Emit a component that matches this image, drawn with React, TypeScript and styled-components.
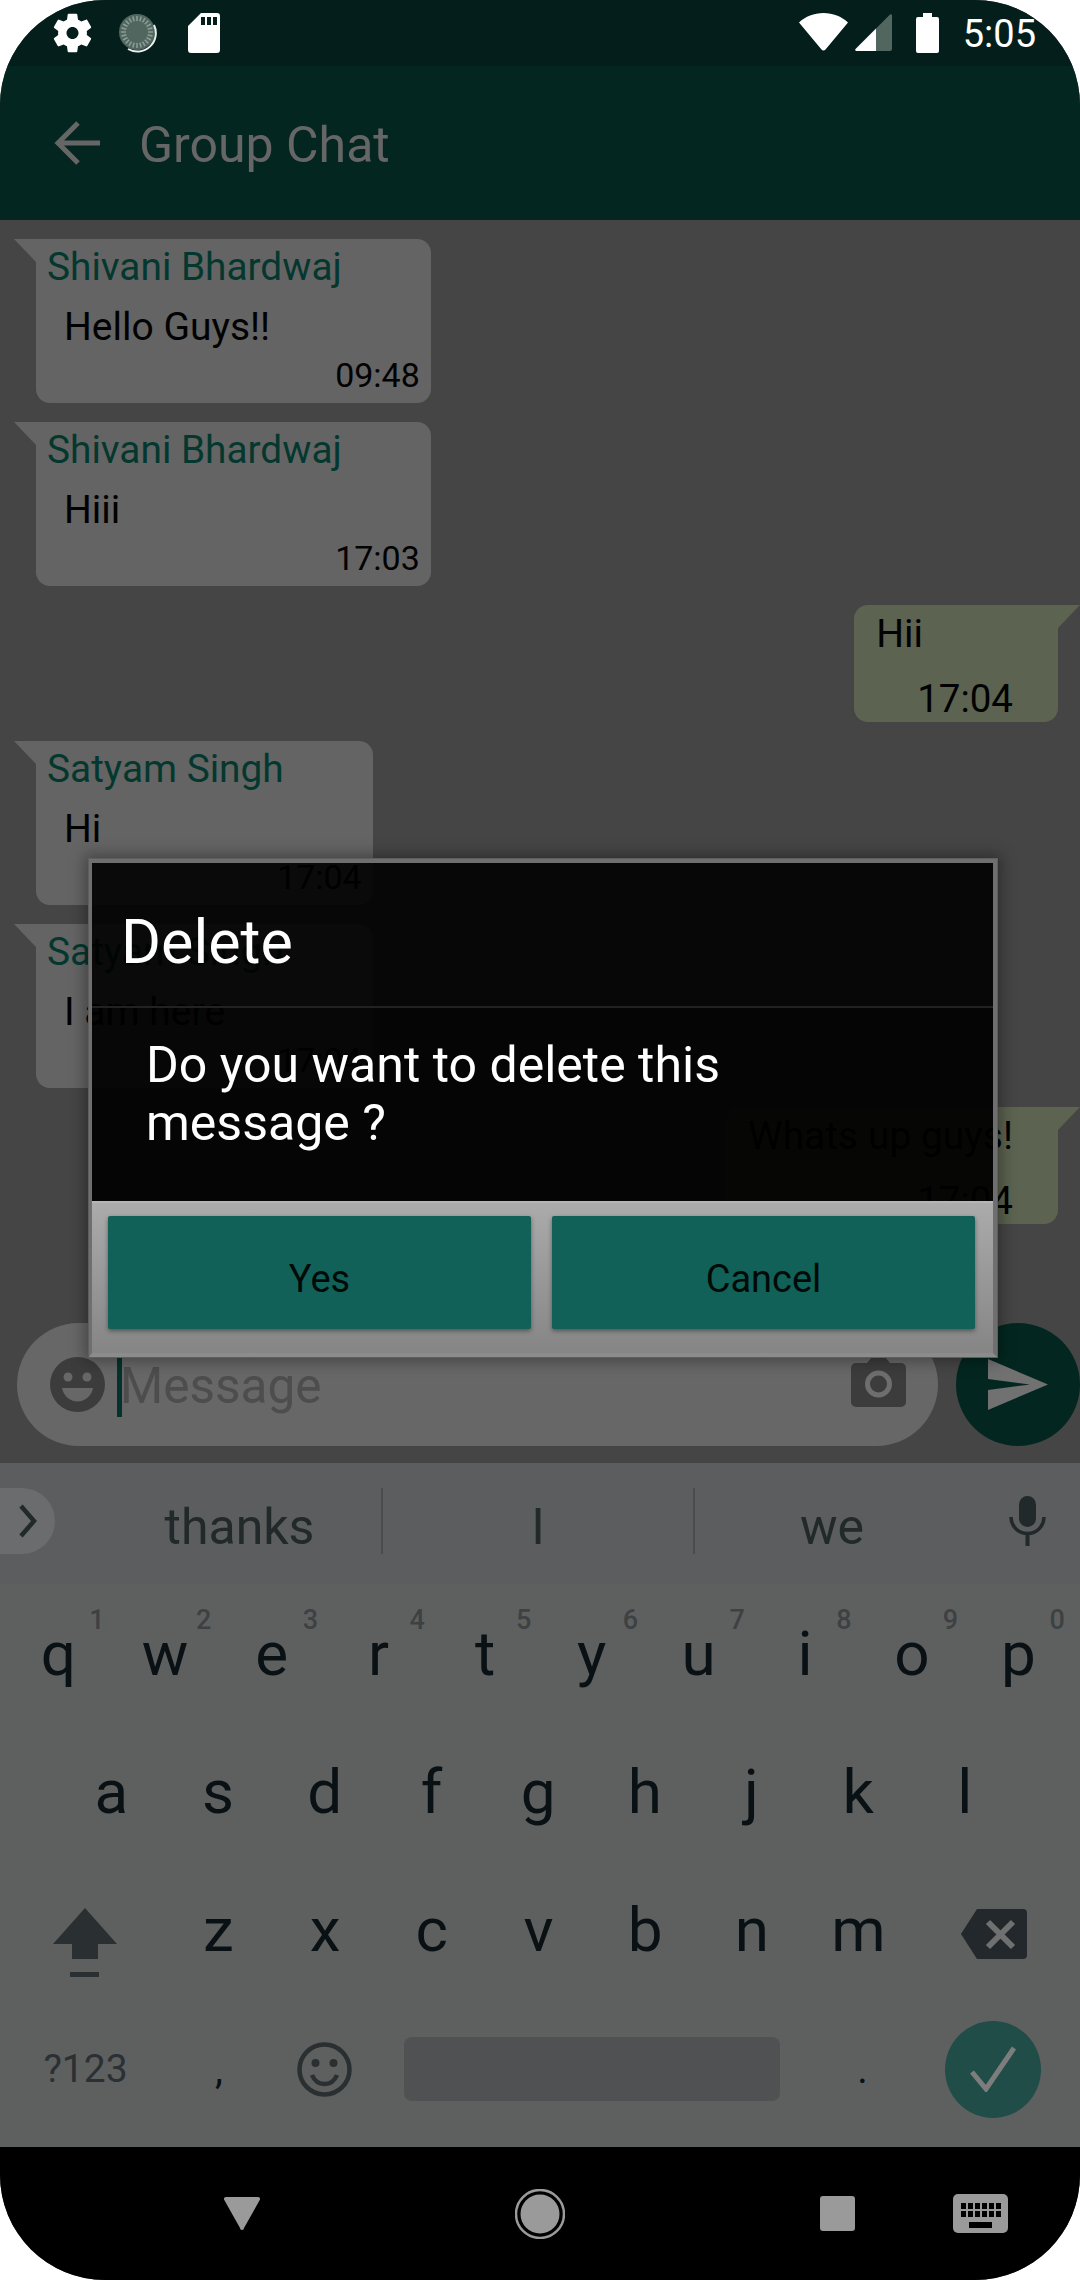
import React from 'react';
import styled, { createGlobalStyle } from 'styled-components';

const GlobalStyle = createGlobalStyle`
  html, body {
    margin: 0;
    padding: 0;
    background: #fff;
    font-family: Roboto, "Noto Sans", sans-serif;
  }
`;

const Screen = styled.div`
  position: relative;
  width: 1080px;
  height: 2280px;
  border-radius: 105px;
  overflow: hidden;
  display: flex;
  flex-direction: column;
  background: #454545;
`;

const StatusBar = styled.div`
  height: 66px;
  flex: none;
  background: #041f1b;
  display: flex;
  align-items: flex-start;
  padding: 13px 44px 0 53px;
  box-sizing: border-box;
  color: #fff;
`;
const StatusGroup = styled.div<{ $end?: boolean }>`
  display: flex;
  align-items: flex-start;
  margin-left: ${(p) => (p.$end ? 'auto' : '0')};
`;
const StatusIcon = styled.svg<{ $gap?: number }>`
  display: block;
  margin-left: ${(p) => p.$gap ?? 0}px;
`;
const Clock = styled.span`
  font-size: 38px;
  line-height: 44px;
  margin-left: 24px;
  margin-top: -1px;
`;

const AppBar = styled.div`
  height: 154px;
  flex: none;
  background: #032720;
  display: flex;
  align-items: center;
  padding-left: 54px;
  color: #666;
`;
const Title = styled.div`
  font-size: 50px;
  margin-left: 39px;
  margin-top: 3px;
`;

const Chat = styled.div`
  flex: 1;
  min-height: 0;
  display: flex;
  flex-direction: column;
  padding-bottom: 17px;
`;
const MessageList = styled.div`
  flex: 1;
  display: flex;
  flex-direction: column;
  gap: 19px;
  padding-top: 19px;
`;

const Bubble = styled.div<{ $mine?: boolean }>`
  position: relative;
  display: flex;
  flex-direction: column;
  color: #020202;
  font-size: 39px;
  line-height: 46px;
  background: ${(p) => (p.$mine ? '#5c6350' : '#646464')};
  align-self: ${(p) => (p.$mine ? 'flex-end' : 'flex-start')};
  margin: ${(p) => (p.$mine ? '0 22px 0 0' : '0 0 0 36px')};
  padding: ${(p) => (p.$mine ? '6px 45px 1px 22px' : '5px 0 8px')};
  border-radius: ${(p) => (p.$mine ? '14px 0 14px 14px' : '0 14px 14px 14px')};

  &::before {
    content: '';
    position: absolute;
    top: 0;
    width: 22px;
    height: 23px;
    background: inherit;
    ${(p) =>
      p.$mine
        ? 'right: -22px; clip-path: polygon(0 0, 100% 0, 0 100%);'
        : 'left: -22px; clip-path: polygon(0 0, 100% 0, 100% 100%);'}
  }
`;
const Sender = styled.div`
  color: #04382f;
  font-size: 38.8px;
  margin: 0 89px 0 11px;
`;
const Body = styled.div<{ $mine?: boolean }>`
  margin: ${(p) => (p.$mine ? '0' : '14px 0 0 28px')};
`;
const Time = styled.div<{ $mine?: boolean }>`
  align-self: flex-end;
  font-size: ${(p) => (p.$mine ? 38.5 : 34)}px;
  line-height: ${(p) => (p.$mine ? 45 : 40)}px;
  margin: ${(p) => (p.$mine ? '19px 0 0 41px' : '5px 11px 0 0')};
`;

const InputRow = styled.div`
  display: flex;
  gap: 18px;
  padding-left: 17px;
  flex: none;
`;
const InputPill = styled.div`
  width: 921px;
  height: 123px;
  border-radius: 62px;
  background: #676767;
  display: flex;
  align-items: center;
  padding: 0 32px 0 33px;
  box-sizing: border-box;
`;
const FaceIcon = styled.svg`
  flex: none;
`;
const Caret = styled.div`
  width: 5px;
  height: 61px;
  background: #03332b;
  margin: 4px 0 0 12px;
  flex: none;
`;
const Placeholder = styled.div`
  font-size: 49.5px;
  color: #4d4d4d;
  flex: 1;
  margin: 3px 0 0 -2px;
`;
const CameraIcon = styled.svg`
  flex: none;
  margin-top: -6px;
`;
const SendButton = styled.div`
  width: 124px;
  height: 123px;
  border-radius: 50%;
  background: #032720;
  flex: none;
  display: flex;
  align-items: center;
  justify-content: center;
`;

const Keyboard = styled.div`
  height: 684px;
  flex: none;
  background: #5e605f;
  display: flex;
  flex-direction: column;
  color: #0a1114;
`;
const Suggestions = styled.div`
  height: 121px;
  flex: none;
  background: #5b5d5f;
  display: flex;
  align-items: center;
  color: #22292b;
`;
const ChevronPill = styled.div`
  width: 55px;
  height: 66px;
  border-radius: 0 33px 33px 0;
  background: #6b6c6d;
  margin-right: 43px;
  display: flex;
  align-items: center;
  justify-content: center;
  flex: none;
  margin-top: -6px;
`;
const Suggestion = styled.div<{ $width: number; $divider?: boolean }>`
  width: ${(p) => p.$width}px;
  height: 66px;
  margin-top: -6px;
  flex: none;
  box-sizing: border-box;
  text-align: center;
  font-size: 50px;
  line-height: 78px;
  border-left: ${(p) => (p.$divider ? '2px solid #4a4d4f' : 'none')};
`;
const MicIcon = styled.svg`
  margin-left: 40px;
  margin-top: -6px;
`;
const KeyRow = styled.div<{ $inset?: number; $drop?: number }>`
  height: 138px;
  flex: none;
  display: flex;
  padding-left: ${(p) => p.$inset ?? 5}px;
  margin-top: ${(p) => p.$drop ?? 0}px;
`;
const Key = styled.div<{ $width?: number }>`
  position: relative;
  width: ${(p) => p.$width ?? 106.7}px;
  height: 138px;
  flex: none;
  display: flex;
  align-items: center;
  justify-content: center;
  font-size: 62px;
`;
const KeyHint = styled.span`
  position: absolute;
  left: 72px;
  top: 20px;
  width: 40px;
  text-align: center;
  font-size: 27px;
  font-weight: 500;
  line-height: 32px;
  color: #3d4144;
`;
const SymbolsKey = styled(Key)`
  font-size: 39px;
  color: #2a3033;
`;
const PunctuationKey = styled(Key)`
  font-size: 40px;
`;
const ShiftIcon = styled.svg`
  margin: 28px 0 0 5px;
`;
const BackspaceIcon = styled.svg`
  margin-top: 10px;
`;
const SpaceBar = styled.div`
  width: 376px;
  height: 64px;
  border-radius: 8px;
  background: #505153;
  flex: none;
  align-self: center;
  margin-left: 22px;
`;
const EnterKey = styled.div`
  width: 96px;
  height: 97px;
  border-radius: 50%;
  background: #204d48;
  display: flex;
  align-items: center;
  justify-content: center;
  align-self: center;
  flex: none;
`;

const NavBar = styled.div`
  height: 133px;
  flex: none;
  background: #000;
  display: flex;
  align-items: center;
  padding-left: 224px;
`;
const NavIcon = styled.svg<{ $gap?: number }>`
  display: block;
  flex: none;
  margin-left: ${(p) => p.$gap ?? 0}px;
`;

const DialogFrame = styled.div`
  position: absolute;
  left: 89px;
  top: 859px;
  width: 908px;
  height: 498px;
  box-sizing: border-box;
  border: 3px solid #6f6f6f;
  border-top-width: 4px;
  border-right-width: 4px;
  border-bottom: 4px solid #8c8c8c;
  outline: 1px solid #5e5e5e;
  box-shadow: 0 0 14px 4px rgba(0, 0, 0, 0.35);
  display: flex;
  flex-direction: column;
`;
const DialogHead = styled.div`
  height: 145px;
  flex: none;
  box-sizing: border-box;
  padding: 44px 0 0 29px;
  font-size: 61px;
  line-height: 70px;
  color: #fff;
  background: rgba(0, 0, 0, 0.9);
  border-bottom: 2px solid #222;
`;
const DialogBody = styled.div`
  flex: 1;
  min-height: 0;
  box-sizing: border-box;
  padding: 28px 100px 0 54px;
  font-size: 50px;
  line-height: 58px;
  color: #fff;
  background: rgba(0, 0, 0, 0.93);
`;
const DialogActions = styled.div`
  height: 152px;
  flex: none;
  box-sizing: border-box;
  padding: 13px 18px 24px 16px;
  display: flex;
  gap: 21px;
  background: linear-gradient(#ababab, #858585);
  border-top: 2px solid #b5b5b5;
`;
const DialogButton = styled.div`
  flex: 1;
  display: flex;
  align-items: center;
  justify-content: center;
  background: #116158;
  color: #020a08;
  font-size: 38px;
  padding-top: 12px;
  border-radius: 2px;
  box-shadow: 0 2px 4px rgba(40, 40, 40, 0.55);
`;

const messages = [
  { sender: 'Shivani Bhardwaj', text: 'Hello Guys!!', time: '09:48' },
  { sender: 'Shivani Bhardwaj', text: 'Hiii', time: '17:03' },
  { text: 'Hii', time: '17:04', mine: true },
  { sender: 'Satyam Singh', text: 'Hi', time: '17:04' },
  { sender: 'Satyam Singh', text: 'I am here', time: '17:04' },
  { text: 'Whats up guys!', time: '17:04', mine: true },
];

const topRow = ['q', 'w', 'e', 'r', 't', 'y', 'u', 'i', 'o', 'p'];
const hints = ['1', '2', '3', '4', '5', '6', '7', '8', '9', '0'];
const homeRow = ['a', 's', 'd', 'f', 'g', 'h', 'j', 'k', 'l'];
const bottomRow = ['z', 'x', 'c', 'v', 'b', 'n', 'm'];

const spinnerTicks = Array.from({ length: 24 }, (_, i) => (i * 360) / 24);

export default function App() {
  return (
    <>
      <GlobalStyle />
      <Screen>
        <StatusBar>
          <StatusGroup>
            <StatusIcon width="39" height="40" viewBox="2.4 2 19.2 20" fill="#fff">
              <path
                fillRule="evenodd"
                d="M19.14 12.94c.04-.3.06-.61.06-.94 0-.32-.02-.64-.07-.94l2.03-1.58c.18-.14.23-.41.12-.61l-1.92-3.32c-.12-.22-.37-.29-.59-.22l-2.39.96c-.5-.38-1.03-.7-1.62-.94l-.36-2.54c-.04-.24-.24-.41-.48-.41h-3.84c-.24 0-.43.17-.47.41l-.36 2.54c-.59.24-1.13.57-1.62.94l-2.39-.96c-.22-.08-.47 0-.59.22L2.74 8.87c-.12.21-.08.47.12.61l2.03 1.58c-.05.3-.09.63-.09.94s.02.64.07.94l-2.03 1.58c-.18.14-.23.41-.12.61l1.92 3.32c.12.22.37.29.59.22l2.39-.96c.5.38 1.03.7 1.62.94l.36 2.54c.05.24.24.41.48.41h3.84c.24 0 .44-.17.47-.41l.36-2.54c.59-.24 1.13-.56 1.62-.94l2.39.96c.22.08.47 0 .59-.22l1.92-3.32c.12-.22.07-.47-.12-.61l-2.01-1.58zM12 15c-1.65 0-3-1.35-3-3s1.35-3 3-3 3 1.35 3 3-1.35 3-3 3z"
              />
            </StatusIcon>
            <StatusIcon $gap={26} width="40" height="40" viewBox="0 0 40 40">
              <circle cx="19" cy="19" r="18" fill="#51665f" />
              {spinnerTicks.map((a) => (
                <line key={a} x1="19" y1="3" x2="19" y2="8" stroke="#8b9c96" strokeWidth="1.6" transform={`rotate(${a} 19 19)`} />
              ))}
              <path d="M36 12 A18.5 18.5 0 0 1 10 36" fill="none" stroke="#e8eeec" strokeWidth="2" />
            </StatusIcon>
            <StatusIcon $gap={30} width="32" height="40" viewBox="0 0 32 40" fill="#fff">
              <path
                fillRule="evenodd"
                d="M13 0h16a3 3 0 0 1 3 3v34a3 3 0 0 1-3 3H3a3 3 0 0 1-3-3V13zM13 4v8h4V4zM19 4v8h4V4zM25 4v8h4V4z"
              />
            </StatusIcon>
          </StatusGroup>
          <StatusGroup $end>
            <StatusIcon width="49" height="38" viewBox="0 0 49 38" fill="#fff">
              <path d="M0 9.5C6.5 3.5 15 0 24.5 0S42.5 3.5 49 9.5L26.5 36.5a2.6 2.6 0 0 1-4 0z" />
            </StatusIcon>
            <StatusIcon $gap={7} width="37" height="38" viewBox="0 0 37 38">
              <path d="M35 1.5a1.2 1.2 0 0 1 2 .8V36a2 2 0 0 1-2 2H21V15.5z" fill="#51665f" />
              <path d="M21 15.5V38H1.5a1.2 1.2 0 0 1-1-2z" fill="#fff" />
            </StatusIcon>
            <StatusIcon $gap={24} width="23" height="40" viewBox="0 0 23 40" fill="#fff">
              <path d="M7 0h9v4h5a2 2 0 0 1 2 2v32a2 2 0 0 1-2 2H2a2 2 0 0 1-2-2V6a2 2 0 0 1 2-2h5z" />
            </StatusIcon>
            <Clock>5:05</Clock>
          </StatusGroup>
        </StatusBar>

        <AppBar>
          <svg width="46" height="44" viewBox="0 0 46 44" fill="none" stroke="#666" strokeWidth="5">
            <path d="M46 22H5M24 2L4 22l20 20" />
          </svg>
          <Title>Group Chat</Title>
        </AppBar>

        <Chat>
          <MessageList>
            {messages.map((m, i) => (
              <Bubble key={i} $mine={m.mine}>
                {m.sender && <Sender>{m.sender}</Sender>}
                <Body $mine={m.mine}>{m.text}</Body>
                <Time $mine={m.mine}>{m.time}</Time>
              </Bubble>
            ))}
          </MessageList>
          <InputRow>
            <InputPill>
              <FaceIcon width="55" height="55" viewBox="0 0 55 55">
                <circle cx="27.5" cy="27.5" r="27.5" fill="#3c3c3c" />
                <circle cx="18" cy="20" r="4.5" fill="#676767" />
                <circle cx="37" cy="20" r="4.5" fill="#676767" />
                <path d="M12 31h31c-1.5 8-8 13.5-15.5 13.5S13.5 39 12 31z" fill="#676767" />
              </FaceIcon>
              <Caret />
              <Placeholder>Message</Placeholder>
              <CameraIcon width="55" height="50" viewBox="0 0 55 50">
                <path
                  fill="#3c3c3c"
                  d="M5 6h11l5-6h13l5 6h11a5 5 0 0 1 5 5v34a5 5 0 0 1-5 5H5a5 5 0 0 1-5-5V11a5 5 0 0 1 5-5z"
                />
                <circle cx="27.5" cy="27" r="11" fill="none" stroke="#6e6e6e" strokeWidth="5" />
              </CameraIcon>
            </InputPill>
            <SendButton>
              <svg width="60" height="51" viewBox="0 0 60 51">
                <path d="M0 0l60 25.5L0 51V31l42-5.5L0 20z" fill="#717171" />
              </svg>
            </SendButton>
          </InputRow>
        </Chat>

        <Keyboard>
          <Suggestions>
            <ChevronPill>
              <svg width="20" height="34" viewBox="0 0 20 34" fill="none" stroke="#22292b" strokeWidth="4.5">
                <path d="M3 2l13 15L3 32" />
              </svg>
            </ChevronPill>
            <Suggestion $width={283}>thanks</Suggestion>
            <Suggestion $width={312} $divider>
              I
            </Suggestion>
            <Suggestion $width={276} $divider>
              we
            </Suggestion>
            <MicIcon width="37" height="50" viewBox="0 0 37 50" fill="#22292b">
              <rect x="10" y="0" width="17" height="31" rx="8.5" />
              <path d="M2 21a16.5 16.5 0 0 0 33 0" fill="none" stroke="#22292b" strokeWidth="3.5" />
              <rect x="16.5" y="36" width="4" height="14" />
            </MicIcon>
          </Suggestions>

          <KeyRow>
            {topRow.map((k, i) => (
              <Key key={k}>
                {k}
                <KeyHint>{hints[i]}</KeyHint>
              </Key>
            ))}
          </KeyRow>
          <KeyRow $inset={58}>
            {homeRow.map((k) => (
              <Key key={k}>{k}</Key>
            ))}
          </KeyRow>
          <KeyRow $inset={0}>
            <Key $width={165}>
              <ShiftIcon width="64" height="70" viewBox="0 0 64 70" fill="#2a2f31">
                <path d="M32 0l32 36H45v15H19V36H0z" />
                <rect x="17" y="64" width="29" height="5" />
              </ShiftIcon>
            </Key>
            {bottomRow.map((k) => (
              <Key key={k}>{k}</Key>
            ))}
            <Key $width={165}>
              <BackspaceIcon width="66" height="50" viewBox="0 0 66 50">
                <path d="M16 0h46a4 4 0 0 1 4 4v42a4 4 0 0 1-4 4H16L0 25z" fill="#22282b" />
                <path d="M27 13l25 25M52 13L27 38" stroke="#6f706f" strokeWidth="6" />
              </BackspaceIcon>
            </Key>
          </KeyRow>
          <KeyRow $inset={0} $drop={2}>
            <SymbolsKey $width={171}>?123</SymbolsKey>
            <PunctuationKey $width={96}>,</PunctuationKey>
            <Key $width={115}>
              <svg width="55" height="55" viewBox="0 0 55 55" fill="none" stroke="#2a2f31" strokeWidth="4.5">
                <circle cx="27.5" cy="27.5" r="25" />
                <circle cx="18.5" cy="21" r="4" fill="#2a2f31" stroke="none" />
                <circle cx="36.5" cy="21" r="4" fill="#2a2f31" stroke="none" />
                <path d="M15 33c2.5 6 7 9 12.5 9s10-3 12.5-9" />
              </svg>
            </Key>
            <SpaceBar />
            <PunctuationKey $width={165}>.</PunctuationKey>
            <EnterKey>
              <svg width="48" height="46" viewBox="0 0 48 46" fill="none" stroke="#7d7d7d" strokeWidth="5">
                <path d="M3 26l14 17L45 2" />
              </svg>
            </EnterKey>
          </KeyRow>
        </Keyboard>

        <NavBar>
          <NavIcon width="36" height="33" viewBox="0 0 36 33" fill="#9a9a9a">
            <path d="M2 0h32a2 2 0 0 1 2 2.5L20 31a2 2 0 0 1-4 0L0 2.5A2 2 0 0 1 2 0z" />
          </NavIcon>
          <NavIcon $gap={255} width="50" height="50" viewBox="0 0 50 50">
            <circle cx="25" cy="25" r="24" fill="none" stroke="#9a9a9a" strokeWidth="2.5" />
            <circle cx="25" cy="25" r="19.5" fill="#9a9a9a" />
          </NavIcon>
          <NavIcon $gap={255} width="35" height="35" viewBox="0 0 35 35" fill="#9a9a9a">
            <rect width="35" height="35" rx="3" />
          </NavIcon>
          <NavIcon $gap={98} width="55" height="39" viewBox="0 0 55 39">
            <rect width="55" height="39" rx="5" fill="#9a9a9a" />
            {[0, 1].map((r) =>
              [0, 1, 2, 3, 4, 5].map((c) => (
                <rect key={`${r}${c}`} x={8 + c * 7} y={9 + r * 8} width="5" height="6" fill="#000" />
              ))
            )}
            <rect x="16" y="28" width="23" height="6" fill="#000" />
          </NavIcon>
        </NavBar>

        <DialogFrame>
          <DialogHead>Delete</DialogHead>
          <DialogBody>Do you want to delete this message ?</DialogBody>
          <DialogActions>
            <DialogButton>Yes</DialogButton>
            <DialogButton>Cancel</DialogButton>
          </DialogActions>
        </DialogFrame>
      </Screen>
    </>
  );
}
